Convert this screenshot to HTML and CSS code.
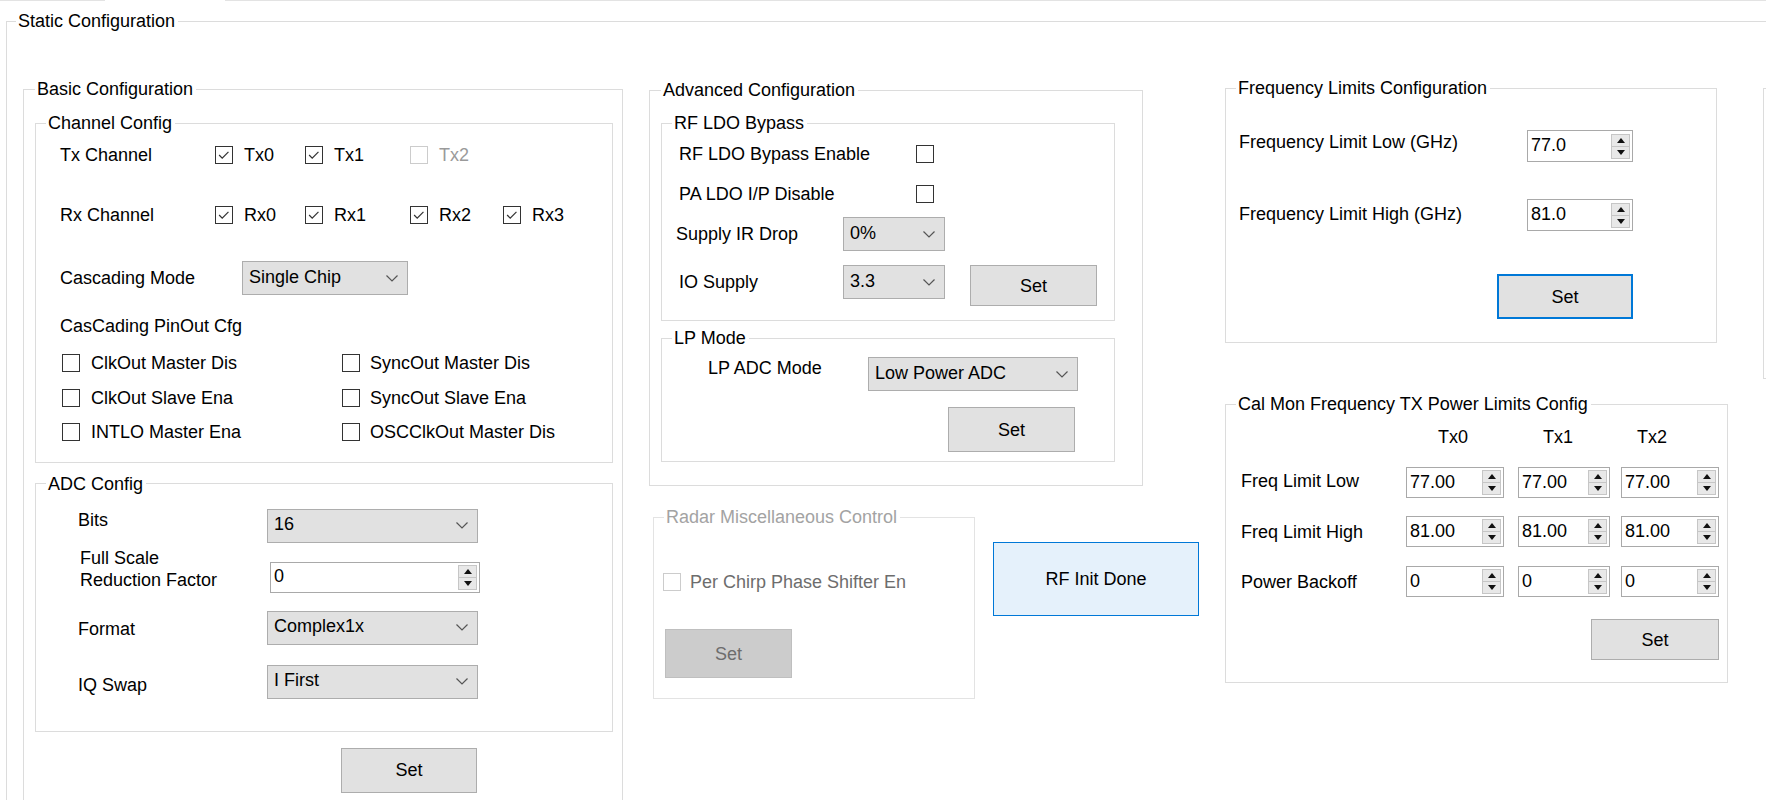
FILE: index.html
```html
<!DOCTYPE html>
<html>
<head>
<meta charset="utf-8">
<link rel="stylesheet" href="styles.css">
</head>
<body>
<div class="topline"><span class="seg seg-a"></span><span class="seg-gap"></span><span class="seg seg-b"></span></div>
<fieldset class="grp static">
  <legend class="lg-static">Static Configuration</legend>
  <div class="cols">
    <!-- Column 1 -->
    <fieldset class="grp basic">
      <legend class="lg-pad">Basic Configuration</legend>
      <fieldset class="grp chan">
        <legend>Channel Config</legend>
        <div class="row r-tx">
          <span class="lbl w-chan">Tx Channel</span>
          <span class="ci ci1"><span class="cb on"><svg viewBox="0 0 18 18"><polyline points="3.5,9 7,12.5 14,5.5"/></svg></span><span class="ct">Tx0</span></span>
          <span class="ci ci2"><span class="cb on"><svg viewBox="0 0 18 18"><polyline points="3.5,9 7,12.5 14,5.5"/></svg></span><span class="ct">Tx1</span></span>
          <span class="ci ci3"><span class="cb dis"></span><span class="ct dis-t">Tx2</span></span>
        </div>
        <div class="row r-rx">
          <span class="lbl w-chan">Rx Channel</span>
          <span class="ci ci1"><span class="cb on"><svg viewBox="0 0 18 18"><polyline points="3.5,9 7,12.5 14,5.5"/></svg></span><span class="ct">Rx0</span></span>
          <span class="ci ci2"><span class="cb on"><svg viewBox="0 0 18 18"><polyline points="3.5,9 7,12.5 14,5.5"/></svg></span><span class="ct">Rx1</span></span>
          <span class="ci ci3"><span class="cb on"><svg viewBox="0 0 18 18"><polyline points="3.5,9 7,12.5 14,5.5"/></svg></span><span class="ct">Rx2</span></span>
          <span class="ci"><span class="cb on"><svg viewBox="0 0 18 18"><polyline points="3.5,9 7,12.5 14,5.5"/></svg></span><span class="ct">Rx3</span></span>
        </div>
        <div class="row r-casc">
          <span class="lbl w-casc">Cascading Mode</span>
          <div class="combo w166"><span class="cv">Single Chip</span><svg class="chev" viewBox="0 0 12 7"><polyline points="0.5,0.5 6,6 11.5,0.5"/></svg></div>
        </div>
        <div class="row r-pin">
          <span class="lbl pin-lbl">CasCading PinOut Cfg</span>
        </div>
        <div class="row r-opt">
          <span class="ci opt-l"><span class="cb"></span><span class="ct">ClkOut Master Dis</span></span>
          <span class="ci"><span class="cb"></span><span class="ct ct-r">SyncOut Master Dis</span></span>
        </div>
        <div class="row r-opt">
          <span class="ci opt-l"><span class="cb"></span><span class="ct">ClkOut Slave Ena</span></span>
          <span class="ci"><span class="cb"></span><span class="ct ct-r">SyncOut Slave Ena</span></span>
        </div>
        <div class="row r-opt">
          <span class="ci opt-l"><span class="cb"></span><span class="ct">INTLO Master Ena</span></span>
          <span class="ci"><span class="cb"></span><span class="ct ct-r">OSCClkOut Master Dis</span></span>
        </div>
      </fieldset>

      <fieldset class="grp adc">
        <legend>ADC Config</legend>
        <div class="arow a-bits">
          <span class="lbl w-adc">Bits</span>
          <div class="combo w211"><span class="cv">16</span><svg class="chev" viewBox="0 0 12 7"><polyline points="0.5,0.5 6,6 11.5,0.5"/></svg></div>
        </div>
        <div class="arow a-fs">
          <span class="lbl w-adc fs-lbl">Full Scale<br>Reduction Factor</span>
          <div class="spin w210 fs-spin"><span class="sv">0</span><span class="arrows"><span class="ab up"></span><span class="ab dn"></span></span></div>
        </div>
        <div class="arow a-fmt">
          <span class="lbl w-adc m7">Format</span>
          <div class="combo w211"><span class="cv">Complex1x</span><svg class="chev" viewBox="0 0 12 7"><polyline points="0.5,0.5 6,6 11.5,0.5"/></svg></div>
        </div>
        <div class="arow a-iq">
          <span class="lbl w-adc m9">IQ Swap</span>
          <div class="combo w211"><span class="cv">I First</span><svg class="chev" viewBox="0 0 12 7"><polyline points="0.5,0.5 6,6 11.5,0.5"/></svg></div>
        </div>
      </fieldset>
      <div class="btn set-basic">Set</div>
    </fieldset>

    <!-- Column 2 -->
    <div class="col2">
      <fieldset class="grp adv">
        <legend class="lg-pad">Advanced Configuration</legend>
        <fieldset class="grp ldo">
          <legend>RF LDO Bypass</legend>
          <div class="row r-ldo">
            <span class="lbl w-ldo">RF LDO Bypass Enable</span><span class="cb"></span>
          </div>
          <div class="row r-ldo">
            <span class="lbl w-ldo">PA LDO I/P Disable</span><span class="cb"></span>
          </div>
          <div class="row r-ir">
            <span class="lbl w-ir">Supply IR Drop</span>
            <div class="combo w102"><span class="cv">0%</span><svg class="chev" viewBox="0 0 12 7"><polyline points="0.5,0.5 6,6 11.5,0.5"/></svg></div>
          </div>
          <div class="row r-io">
            <span class="lbl w-io">IO Supply</span>
            <div class="combo w102"><span class="cv">3.3</span><svg class="chev" viewBox="0 0 12 7"><polyline points="0.5,0.5 6,6 11.5,0.5"/></svg></div>
            <div class="btn set-io">Set</div>
          </div>
        </fieldset>
        <fieldset class="grp lp">
          <legend>LP Mode</legend>
          <div class="row r-lp">
            <span class="lbl w-lp">LP ADC Mode</span>
            <div class="combo w210"><span class="cv">Low Power ADC</span><svg class="chev" viewBox="0 0 12 7"><polyline points="0.5,0.5 6,6 11.5,0.5"/></svg></div>
          </div>
          <div class="btn set-lp">Set</div>
        </fieldset>
      </fieldset>

      <div class="misc-row">
        <fieldset class="grp radar disabled">
          <legend>Radar Miscellaneous Control</legend>
          <div class="row r-chirp">
            <span class="cb dis"></span><span class="ct dis-t2">Per Chirp Phase Shifter En</span>
          </div>
          <div class="btn btn-dis set-radar">Set</div>
        </fieldset>
        <div class="btn rfinit">RF Init Done</div>
      </div>
    </div>

    <!-- Column 3 -->
    <div class="col3">
      <fieldset class="grp freq">
        <legend>Frequency Limits Configuration</legend>
        <div class="row f-r1">
          <span class="lbl w-freq fm1">Frequency Limit Low (GHz)</span>
          <div class="spin w106"><span class="sv">77.0</span><span class="arrows"><span class="ab up"></span><span class="ab dn"></span></span></div>
        </div>
        <div class="row f-r2">
          <span class="lbl w-freq fm4">Frequency Limit High (GHz)</span>
          <div class="spin w106"><span class="sv">81.0</span><span class="arrows"><span class="ab up"></span><span class="ab dn"></span></span></div>
        </div>
        <div class="btn focus set-freq">Set</div>
      </fieldset>

      <fieldset class="grp cal">
        <legend>Cal Mon Frequency TX Power Limits Config</legend>
        <div class="hdr">
          <span class="h h0">Tx0</span><span class="h h1">Tx1</span><span class="h h2">Tx2</span>
        </div>
        <div class="crow c1">
          <span class="lbl w-cal up2">Freq Limit Low</span>
          <div class="spin cs0"><span class="sv">77.00</span><span class="arrows"><span class="ab up"></span><span class="ab dn"></span></span></div>
          <div class="spin cs1"><span class="sv">77.00</span><span class="arrows"><span class="ab up"></span><span class="ab dn"></span></span></div>
          <div class="spin cs2"><span class="sv">77.00</span><span class="arrows"><span class="ab up"></span><span class="ab dn"></span></span></div>
        </div>
        <div class="crow c2">
          <span class="lbl w-cal">Freq Limit High</span>
          <div class="spin cs0"><span class="sv">81.00</span><span class="arrows"><span class="ab up"></span><span class="ab dn"></span></span></div>
          <div class="spin cs1"><span class="sv">81.00</span><span class="arrows"><span class="ab up"></span><span class="ab dn"></span></span></div>
          <div class="spin cs2"><span class="sv">81.00</span><span class="arrows"><span class="ab up"></span><span class="ab dn"></span></span></div>
        </div>
        <div class="crow c3">
          <span class="lbl w-cal">Power Backoff</span>
          <div class="spin cs0"><span class="sv">0</span><span class="arrows"><span class="ab up"></span><span class="ab dn"></span></span></div>
          <div class="spin cs1"><span class="sv">0</span><span class="arrows"><span class="ab up"></span><span class="ab dn"></span></span></div>
          <div class="spin cs2"><span class="sv">0</span><span class="arrows"><span class="ab up"></span><span class="ab dn"></span></span></div>
        </div>
        <div class="btn set-cal">Set</div>
      </fieldset>
    </div>

    <!-- Column 4 (clipped) -->
    <div class="col4"></div>
  </div>
</fieldset>
</body>
</html>
```

FILE: styles.css
```css
* { box-sizing: border-box; }
html, body {
  margin: 0;
  padding: 0;
  background: #ffffff;
  overflow: hidden;
  width: 1766px;
  height: 800px;
}
body {
  font-family: "Liberation Sans", Arial, sans-serif;
  font-size: 18px;
  line-height: 22px;
  color: #000;
}

.topline { display: flex; height: 1px; }
.seg { background: #e3e3e3; height: 1px; }
.seg-a { width: 105px; }
.seg-gap { width: 120px; }
.seg-b { flex: 1; }

.grp {
  margin: 0;
  padding: 0;
  border: 1px solid #dcdcdc;
  min-width: 0;
  flex-shrink: 0;
}
.grp > legend {
  padding: 0 3px 0 2px;
  margin-left: 10px;
  line-height: 22px;
  font-size: 18px;
  color: #000;
}
.grp > legend.lg-pad { margin-left: 0; }

.static {
  margin: 9px 0 0 6px;
  width: 1900px;
  height: 850px;
}
.static > .lg-static { margin-left: 9px; }

.cols {
  display: flex;
  align-items: flex-start;
  padding-left: 16px;
  margin-top: 45px;
}
.cols > * { flex-shrink: 0; }

/* generic */
.row { display: flex; align-items: center; }
.lbl { display: block; flex-shrink: 0; white-space: nowrap; }
.ci { display: flex; align-items: center; flex-shrink: 0; }
.cb {
  width: 18px;
  height: 18px;
  border: 1px solid #333;
  background: #fff;
  flex-shrink: 0;
  display: block;
}
.cb svg { display: block; width: 16px; height: 16px; }
.cb svg polyline { fill: none; stroke: #333; stroke-width: 1.4; }
.cb.dis { border-color: #cccccc; }
.ct { margin-left: 11px; white-space: nowrap; }
.dis-t { color: #9a9a9a; }

.combo {
  display: flex;
  align-items: center;
  height: 34px;
  background: #e1e1e1;
  border: 1px solid #adadad;
  padding-left: 6px;
  padding-right: 9px;
  flex-shrink: 0;
}
.combo .cv { flex: 1; white-space: nowrap; margin-top: -3px; }
.chev { width: 12px; height: 7px; display: block; }
.chev polyline { fill: none; stroke: #555; stroke-width: 1.2; }

.spin {
  display: flex;
  align-items: center;
  height: 31px;
  background: #fff;
  border: 1px solid #a9a9a9;
  padding-left: 3px;
  padding-right: 2px;
  flex-shrink: 0;
}
.spin .sv { flex: 1; white-space: nowrap; margin-top: -2px; }
.arrows {
  display: flex;
  flex-direction: column;
  width: 19px;
  height: 25px;
}
.ab {
  flex: 1;
  background: #e8e8e8;
  border: 1px solid #c6c6c6;
  display: flex;
  align-items: center;
  justify-content: center;
}
.ab.dn { border-top: none; }
.ab.up::after {
  content: "";
  border-left: 4px solid transparent;
  border-right: 4px solid transparent;
  border-bottom: 5px solid #111;
}
.ab.dn::after {
  content: "";
  border-left: 4px solid transparent;
  border-right: 4px solid transparent;
  border-top: 5px solid #111;
}

.btn {
  display: flex;
  align-items: center;
  justify-content: center;
  background: #e1e1e1;
  border: 1px solid #adadad;
  flex-shrink: 0;
}
.btn.focus { border: 2px solid #0078d7; }
.btn-dis { background: #cccccc; border-color: #bfbfbf; color: #6d6d6d; }

/* Column 1 */
.basic {
  width: 600px;
  height: 740px;
  margin-top: 1px;
  padding-left: 11px;
}
.chan {
  width: 578px;
  margin-top: 12px;
  padding-bottom: 12px;
}
.r-tx { height: 42px; }
.r-rx { height: 78px; }
.r-casc { height: 48px; }
.r-pin { height: 44px; padding-top: 4px; }
.r-opt { height: 34.5px; }
.w-chan { width: 179px; padding-left: 24px; }
.ci1 { width: 90px; }
.ci2 { width: 105px; }
.ci3 { width: 93px; }
.w-casc { width: 206px; padding-left: 24px; }
.pin-lbl { padding-left: 24px; }
.opt-l { width: 306px; padding-left: 26px; }
.ct-r { margin-left: 10px; }
.w166 { width: 166px; }

.adc {
  width: 578px;
  margin-top: 10px;
  padding-bottom: 32px;
}
.arow { display: flex; align-items: flex-start; }
.w-adc { width: 231px; padding-left: 42px; }
.a-bits { margin-top: 14px; }
.a-fs { margin-top: 4px; }
.fs-lbl { padding-left: 44px; }
.fs-spin { margin-top: 15px; margin-left: 3px; }
.a-fmt { margin-top: 18px; }
.a-iq { margin-top: 20px; }
.m7 { margin-top: 7px; }
.m9 { margin-top: 9px; }
.w211 { width: 211px; }
.w210 { width: 210px; }
.set-basic {
  width: 136px;
  height: 45px;
  margin-top: 16px;
  margin-left: 306px;
}

/* Column 2 */
.col2 { width: 494px; margin-left: 26px; margin-top: 2px; }
.adv { width: 494px; padding-left: 11px; padding-bottom: 23px; }
.ldo { width: 454px; margin-top: 11px; padding-bottom: 14px; }
.r-ldo { height: 40px; }
.w-ldo { width: 254px; padding-left: 17px; }
.r-ir { margin-top: 3px; height: 34px; }
.w-ir { width: 181px; padding-left: 14px; }
.w102 { width: 102px; }
.r-io { margin-top: 14px; height: 41px; align-items: flex-start; }
.w-io { width: 181px; padding-left: 17px; margin-top: 6px; }
.set-io { width: 127px; height: 41px; margin-left: 25px; }
.lp { width: 454px; margin-top: 6px; padding-bottom: 9px; }
.r-lp { margin-top: 8px; align-items: flex-start; }
.w-lp { width: 206px; padding-left: 46px; }
.set-lp { width: 127px; height: 45px; margin-top: 16px; margin-left: 286px; }

.misc-row { display: flex; align-items: flex-start; margin-top: 20px; width: 560px; }
.misc-row > * { flex-shrink: 0; }
.radar {
  width: 322px;
  margin-left: 4px;
  padding-bottom: 20px;
  border-color: #e3e3e3;
}
.radar > legend { color: #a3a3a3; }
.r-chirp { margin-top: 44px; height: 19px; padding-left: 9px; }
.dis-t2 { color: #6d6d6d; margin-left: 9px; }
.set-radar { width: 127px; height: 49px; margin-top: 38px; margin-left: 11px; }
.rfinit {
  width: 206px;
  height: 74px;
  margin-left: 18px;
  margin-top: 36px;
  background: #e5f1fb;
  border: 1px solid #0078d7;
}

/* Column 3 */
.col3 { width: 503px; margin-left: 82px; }
.freq { width: 492px; padding-bottom: 23px; }
.f-r1 { margin-top: 31px; align-items: flex-start; }
.f-r2 { margin-top: 37px; align-items: flex-start; }
.w-freq { width: 301px; padding-left: 13px; }
.fm1 { margin-top: 1px; }
.fm4 { margin-top: 4px; }
.w106 { width: 106px; height: 32px; }
.set-freq { width: 136px; height: 45px; margin-top: 43px; margin-left: 271px; }

.cal { width: 503px; margin-top: 50px; padding-bottom: 22px; }
.hdr { display: flex; margin-top: 11px; height: 22px; padding-left: 212px; }
.h { display: block; }
.h0 { width: 105px; }
.h1 { width: 94px; }
.crow { display: flex; align-items: center; height: 31px; }
.c1 { margin-top: 19px; }
.c2 { margin-top: 18px; }
.c3 { margin-top: 19px; }
.w-cal { width: 180px; padding-left: 15px; }
.up2 { margin-top: -4px; }
.cs0 { width: 98px; }
.cs1 { width: 92px; margin-left: 14px; }
.cs2 { width: 98px; margin-left: 11px; }
.set-cal { width: 128px; height: 41px; margin-top: 22px; margin-left: 365px; }

/* Column 4 */
.col4 {
  width: 100px;
  height: 291px;
  margin-left: 35px;
  margin-top: 11px;
  border: 1px solid #dcdcdc;
}
```
